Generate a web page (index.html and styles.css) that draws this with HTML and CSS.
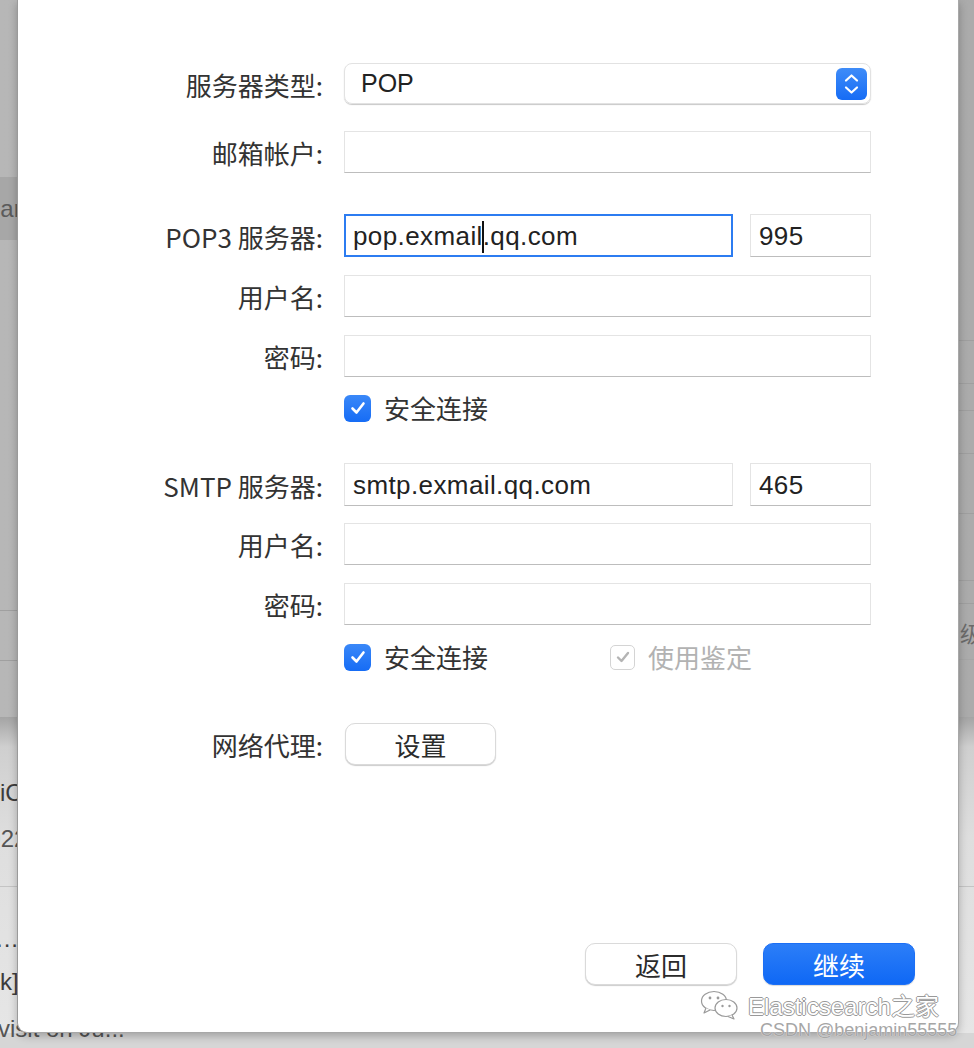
FILE: index.html
```html
<!DOCTYPE html>
<html lang="zh-CN">

<head>
  <meta charset="UTF-8">
  <meta name="viewport" content="width=device-width, initial-scale=1">
  <title>添加帐户</title>
  <link rel="stylesheet" href="styles.css">
</head>

<body>

  <!-- app window behind the sheet -->
  <div class="backdrop">
    <div class="top-pane">
      <div class="sidebar">
        <div class="side-item selected"><span class="clip-text">Exchange</span></div>
        <div class="side-item lined"></div>
      </div>
      <div class="table">
        <div class="t-row h43"></div>
        <div class="t-row h27"></div>
        <div class="t-row h43"></div>
        <div class="t-row h60"></div>
        <div class="t-row h67"></div>
        <div class="t-row h23"></div>
        <div class="t-row level"><span>级</span></div>
      </div>
    </div>
    <div class="bottom-pane">
      <div class="msg">
        <div class="msg-title">iCloud 邮件</div>
        <div class="msg-date">2022/10/12</div>
      </div>
      <div class="msg">
        <div class="msg-dots">..........</div>
        <div class="msg-title second">k] Elastic</div>
        <div class="msg-sub">visit on Ju...</div>
      </div>
    </div>
  </div>

  <div class="sheet">
    <div class="form">

      <div class="row first">
        <label class="lbl">服务器类型:</label>
        <div class="select">
          <span>POP</span>
          <span class="stepper">
            <svg width="31" height="32" viewBox="0 0 31 32">
              <path d="M10 12.5 L15.5 7.5 L21 12.5" fill="none" stroke="#fff" stroke-width="2.2" stroke-linecap="round" stroke-linejoin="round" />
              <path d="M10 19.5 L15.5 24.5 L21 19.5" fill="none" stroke="#fff" stroke-width="2.2" stroke-linecap="round" stroke-linejoin="round" />
            </svg>
          </span>
        </div>
      </div>

      <div class="row gap-27">
        <label class="lbl">邮箱帐户:</label>
        <div class="field"></div>
      </div>

      <div class="row gap-41 tall">
        <label class="lbl">POP3 服务器:</label>
        <div class="pair">
          <div class="field focus">pop.exmail<span class="caret"></span>.qq.com</div>
          <div class="field port">995</div>
        </div>
      </div>

      <div class="row gap-18">
        <label class="lbl">用户名:</label>
        <div class="field"></div>
      </div>

      <div class="row gap-18">
        <label class="lbl">密码:</label>
        <div class="field"></div>
      </div>

      <div class="row gap-17 checks">
        <span></span>
        <div class="check-line">
          <span class="check on">
            <svg width="18" height="18" viewBox="0 0 18 18"><path d="M3.5 9.5 L7.5 13.5 L14.5 4.5" fill="none" stroke="#fff" stroke-width="2.6" stroke-linecap="round" stroke-linejoin="round" /></svg>
          </span>
          <span class="check-text">安全连接</span>
        </div>
      </div>

      <div class="row gap-41 tall">
        <label class="lbl">SMTP 服务器:</label>
        <div class="pair">
          <div class="field">smtp.exmail.qq.com</div>
          <div class="field port">465</div>
        </div>
      </div>

      <div class="row gap-17">
        <label class="lbl">用户名:</label>
        <div class="field"></div>
      </div>

      <div class="row gap-18">
        <label class="lbl">密码:</label>
        <div class="field"></div>
      </div>

      <div class="row gap-18 checks">
        <span></span>
        <div class="check-line">
          <span class="check on">
            <svg width="18" height="18" viewBox="0 0 18 18"><path d="M3.5 9.5 L7.5 13.5 L14.5 4.5" fill="none" stroke="#fff" stroke-width="2.6" stroke-linecap="round" stroke-linejoin="round" /></svg>
          </span>
          <span class="check-text">安全连接</span>
          <span class="check off">
            <svg width="18" height="18" viewBox="0 0 18 18"><path d="M4 9.5 L7.5 13 L14 5" fill="none" stroke="#b4b4b4" stroke-width="2.4" stroke-linecap="round" stroke-linejoin="round" /></svg>
          </span>
          <span class="check-text muted">使用鉴定</span>
        </div>
      </div>

      <div class="row gap-52">
        <label class="lbl">网络代理:</label>
        <div><button class="btn proxy">设置</button></div>
      </div>

    </div>

    <div class="footer">
      <button class="btn">返回</button>
      <button class="btn primary">继续</button>
    </div>
  </div>

  <div class="watermark">
    <div class="wm-line">
      <svg width="42" height="30" viewBox="0 0 42 30">
        <ellipse cx="15" cy="11" rx="12.5" ry="9.5" fill="#fff" stroke="#9a9a9a" stroke-width="1.2" />
        <path d="M7 18 L5 23 L11 20" fill="#fff" stroke="#9a9a9a" stroke-width="1.2" stroke-linejoin="round" />
        <ellipse cx="27" cy="18" rx="11" ry="8.5" fill="#fff" stroke="#9a9a9a" stroke-width="1.2" />
        <path d="M33 25 L35 29 L29 26.5" fill="#fff" stroke="#9a9a9a" stroke-width="1.2" stroke-linejoin="round" />
        <circle cx="11" cy="8" r="1.4" fill="#9a9a9a" />
        <circle cx="19" cy="8" r="1.4" fill="#9a9a9a" />
        <circle cx="23.5" cy="16" r="1.2" fill="#9a9a9a" />
        <circle cx="30.5" cy="16" r="1.2" fill="#9a9a9a" />
      </svg>
      <span class="wm-name">Elasticsearch之家</span>
    </div>
    <div class="wm-csdn">CSDN @benjamin55555</div>
  </div>

</body>

</html>
```

FILE: styles.css
```css
* {
  margin: 0;
  padding: 0;
  box-sizing: border-box;
}

body {
  width: 974px;
  height: 1048px;
  overflow: hidden;
  position: relative;
  background: #d6d6d6;
  font-family: "Noto Sans CJK SC", "Liberation Sans", sans-serif;
  color: #3a3a3a;
}

/* ---------- backdrop window ---------- */

.backdrop {
  height: 1033px;
}

.top-pane {
  height: 717px;
  display: grid;
  grid-template-columns: 480px 1fr;
  background: linear-gradient(to right, #b7b7b7, #ababab);
}

.sidebar {
  padding-top: 177px;
}

.side-item.selected {
  height: 63px;
  background: #a7a7a7;
  display: flex;
  align-items: center;
  overflow: hidden;
}

.clip-text {
  font-family: "Liberation Sans", sans-serif;
  font-size: 24px;
  color: #5b5b5b;
  white-space: nowrap;
  margin-left: -53px;
}

.side-item.lined {
  margin-top: 370px;
  height: 51px;
  border-top: 1px solid #a0a0a0;
  border-bottom: 1px solid #a0a0a0;
}

.table {
  padding-top: 340px;
}

.t-row {
  border-top: 1px solid #9f9f9f;
}

.h23 { height: 23px; }
.h27 { height: 27px; }
.h43 { height: 43px; }
.h60 { height: 60px; }
.h67 { height: 67px; }

.t-row.level {
  height: 57px;
  display: flex;
  justify-content: flex-end;
  align-items: center;
  border-bottom: 1px solid #a6a6a6;
}

.t-row.level span {
  font-size: 22px;
  color: #6a6a6a;
  margin-right: -8px;
}

.bottom-pane {
  height: 316px;
  background: linear-gradient(#a4a4a4 0, #cfcfcf 30px, #dedede 120px, #e6e6e6 100%);
  padding-top: 62px;
  font-family: "Liberation Sans", sans-serif;
  font-size: 24px;
  line-height: 28px;
  color: #3c3c3c;
}

.msg {
  white-space: nowrap;
}

.msg-title {
  height: 46px;
}

.msg-date {
  height: 62px;
  margin-left: -26px;
  color: #555;
  border-bottom: 1px solid #c4c4c4;
}

.msg-dots {
  height: 81px;
  padding-top: 38px;
  letter-spacing: 1px;
  margin-left: -4px;
}

.msg-title.second {
  height: 47px;
}

.msg-sub {
  color: #555;
  margin-left: -2px;
}

/* ---------- sheet ---------- */

.sheet {
  position: absolute;
  left: 17px;
  top: 0;
  width: 942px;
  height: 1033px;
  background: #fff;
  border-left: 1px solid #9a9a9a;
  border-right: 1px solid #a8a8a8;
  border-bottom: 1px solid #a8a8a8;
  border-radius: 0 0 10px 10px;
  box-shadow: 0 3px 8px rgba(0, 0, 0, 0.25);
  display: flex;
  flex-direction: column;
}

.form {
  padding-left: 105px;
}

.row {
  display: grid;
  grid-template-columns: 200px 527px;
  column-gap: 21px;
  align-items: center;
}

.row.first { margin-top: 64px; }
.gap-17 { margin-top: 17px; }
.gap-18 { margin-top: 18px; }
.gap-27 { margin-top: 27px; }
.gap-41 { margin-top: 41px; }
.gap-52 { margin-top: 52px; }

.lbl {
  text-align: right;
  font-size: 26px;
  color: #333;
  white-space: nowrap;
  padding-top: 1px;
}

.select {
  height: 41px;
  border: 1px solid #e2e2e2;
  border-radius: 8px;
  box-shadow: 0 1px 1px rgba(0, 0, 0, 0.22);
  display: flex;
  align-items: center;
  justify-content: space-between;
  padding: 0 3px 0 16px;
  font-family: "Liberation Sans", sans-serif;
  font-size: 25px;
  color: #222;
  margin-top: -1px;
}

.stepper {
  width: 31px;
  height: 32px;
  border-radius: 6px;
  background: linear-gradient(#3f8cf8, #166cf5);
  display: flex;
}

.field {
  height: 42px;
  border: 1px solid #e4e4e4;
  border-bottom-color: #bdbdbd;
  display: flex;
  align-items: center;
  padding: 2px 8px 0;
  font-family: "Liberation Sans", sans-serif;
  font-size: 26px;
  letter-spacing: 0.4px;
  color: #222;
  white-space: nowrap;
}

.tall .field {
  height: 43px;
}

.field.focus {
  border: 2px solid #2c7cf1;
  padding-left: 7px;
}

.caret {
  display: inline-block;
  width: 2px;
  height: 32px;
  background: #111;
  margin: 0 -1px;
}

.pair {
  display: flex;
  gap: 17px;
}

.pair .field {
  flex: 1;
}

.pair .field.port {
  flex: 0 0 121px;
}

.checks {
  height: 28px;
  grid-template-rows: 28px;
}

.check-line {
  display: flex;
  align-items: center;
  height: 28px;
}

.check {
  width: 27px;
  height: 27px;
  border-radius: 6px;
  display: flex;
  align-items: center;
  justify-content: center;
}

.check.on {
  background: linear-gradient(#3a88f8, #166cf5);
}

.check.off {
  width: 25px;
  height: 25px;
  border: 1px solid #d4d4d4;
  border-radius: 5px;
  margin-left: 122px;
}

.check-text {
  font-size: 26px;
  line-height: 28px;
  color: #333;
  margin-left: 13px;
}

.check-text.muted {
  color: #b2b2b2;
  margin-left: 13px;
}

.btn {
  font-family: "Noto Sans CJK SC", sans-serif;
  font-size: 26px;
  color: #2b2b2b;
  background: #fff;
  width: 152px;
  height: 42px;
  border: 1px solid #dadada;
  border-radius: 10px;
  box-shadow: 0 1px 1px rgba(0, 0, 0, 0.2);
}

.btn.proxy {
  display: block;
  width: 151px;
  margin-left: 1px;
}

.footer {
  margin-top: auto;
  display: flex;
  justify-content: flex-end;
  gap: 26px;
  padding: 0 43px 47px 0;
}

.btn.primary {
  color: #fff;
  border-color: #1c6ff5;
  background: linear-gradient(#2c7ef8, #0f68f5);
  box-shadow: 0 1px 1px rgba(0, 0, 0, 0.15);
}

/* ---------- watermark ---------- */

.watermark {
  position: absolute;
  left: 699px;
  top: 987px;
}

.wm-line {
  display: flex;
  align-items: center;
  gap: 7px;
}

.wm-name {
  font-family: "Liberation Sans", sans-serif;
  font-size: 24px;
  color: #fff;
  text-shadow: 1px 0 0 #999, -1px 0 0 #999, 0 1px 0 #999, 0 -1px 0 #999;
}

.wm-csdn {
  margin: -2px 0 0 61px;
  font-family: "Liberation Sans", sans-serif;
  font-size: 18px;
  color: #a6a6a6;
  text-shadow: 0 0 1px #fff;
  white-space: nowrap;
}
```
